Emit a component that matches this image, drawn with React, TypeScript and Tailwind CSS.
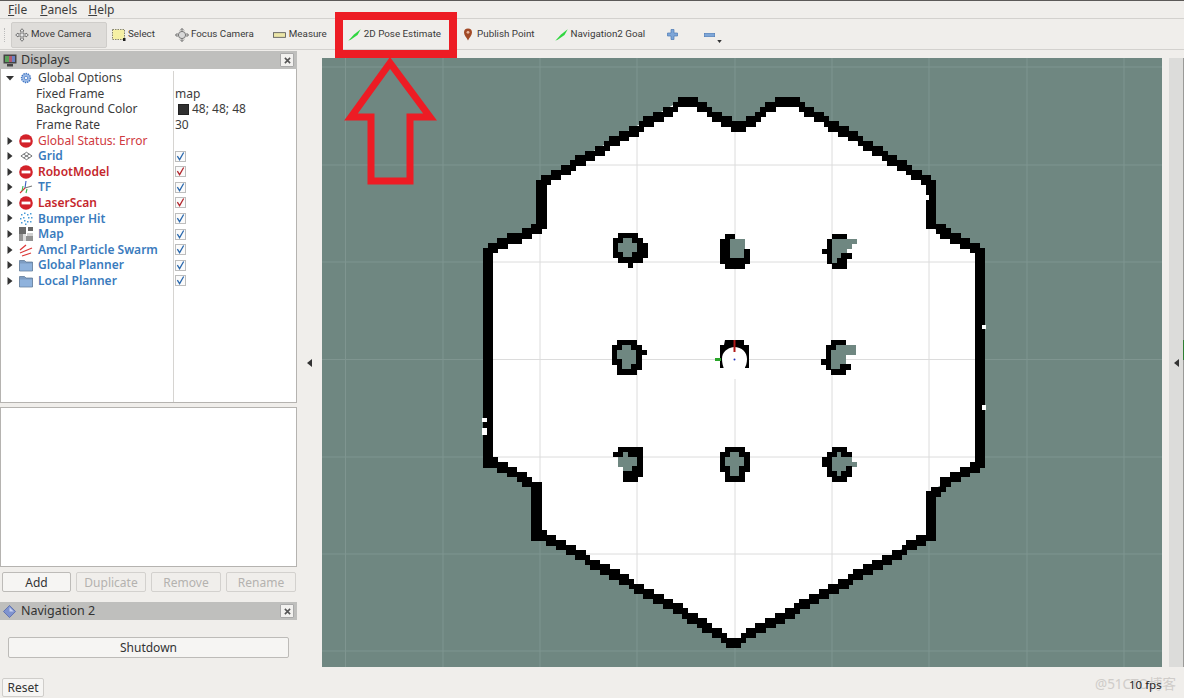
import React from "react";

const CELL = 4.87;
const TEAL = "#6f8781";

const outline: [number, number][] = [
  [680, 101], [690, 101], [735, 128], [780, 101], [790, 101], [929, 184], [929, 226], [980, 252], [980, 463], [929, 492],
  [929, 534], [738, 640], [728, 640], [538, 533], [538, 488], [487, 462], [487, 250], [540, 224], [540, 182],
];

const obstacles: { x: number; y: number; rows: string[] }[] = [
  { x: 613, y: 233, rows: [" ####  ", "##..## ", "#....##", "#....##", "##..###", " ##### ", "   #   "] },
  { x: 720, y: 234, rows: [" ##   ", "##... ", "##... ", "##...#", "##...#", "######", " #### "] },
  { x: 822, y: 234, rows: ["  ###  ", " #.....", " #.... ", "##...  ", " #..## ", " #.## ", "  ###  "] },
  { x: 612, y: 340, rows: [" ####  ", "##..## ", "#....##", "#....# ", "##...# ", " #..## ", " ####  "] },
  { x: 821, y: 340, rows: ["  ###  ", " ##....", " #.....", " #...  ", "##...  ", " #..## ", "  ###  "] },
  { x: 613, y: 447, rows: [" #####", "##.###", " ....#", " ....#", "  ..##", "  ####", "  ### "] },
  { x: 720, y: 447, rows: [" #### ", "##..##", "#....#", "#....#", "##..##", " #..# ", " #### "] },
  { x: 822, y: 447, rows: ["  ### ", " ##.##", "##....", "##.....", " #...#", " ##.##", "  ### "] },
];

function outlineCells() {
  const seen = new Set<string>();
  const ox = 322;
  const oy = 58;
  for (let i = 0; i < outline.length; i++) {
    const [x0, y0] = outline[i];
    const [x1, y1] = outline[(i + 1) % outline.length];
    const steps = Math.ceil(Math.max(Math.abs(x1 - x0), Math.abs(y1 - y0)) / CELL);
    const vertical = x0 === x1;
    for (let s = 0; s <= steps; s++) {
      const cx = Math.round((x0 + ((x1 - x0) * s) / steps - ox) / CELL);
      const cy = Math.round((y0 + ((y1 - y0) * s) / steps - oy) / CELL);
      seen.add(`${cx},${cy}`);
      if (vertical) seen.add(`${cx - 1},${cy}`);
      else seen.add(`${cx},${cy - 1}`);
    }
  }
  return [...seen].map((k) => {
    const [a, b] = k.split(",").map(Number);
    return { x: ox + a * CELL, y: oy + b * CELL };
  });
}

const gridX = [345.5, 443, 540, 637, 735, 832, 929, 1027, 1124];
const gridY = [67, 165, 262, 359.5, 457, 554, 651];

function GridLines({ color }: { color: string }) {
  return (
    <g stroke={color} strokeWidth="1">
      {gridX.map((x) => (
        <line key={x} x1={x} x2={x} y1={58} y2={667} />
      ))}
      {gridY.map((y) => (
        <line key={y} x1={322} x2={1162} y1={y} y2={y} />
      ))}
    </g>
  );
}

function MapView() {
  const points = outline.map((p) => p.join(",")).join(" ");
  return (
    <svg viewBox="322 58 840 609" className="block w-[840px] h-[609px] bg-[#6f8781]">
      <defs>
        <clipPath id="free">
          <polygon points={points} />
        </clipPath>
      </defs>
      <GridLines color="#7f9590" />
      <polygon points={points} fill="#ffffff" />
      <g clipPath="url(#free)">
        <GridLines color="#dcdcdc" />
      </g>
      <g shapeRendering="crispEdges">
        {outlineCells().map((c, i) => (
          <rect key={i} x={c.x} y={c.y} width={CELL + 0.6} height={CELL + 0.6} fill="#000000" />
        ))}
        <rect x="482" y="418" width="5" height="4" fill="#ffffff" />
        <rect x="482" y="428" width="5" height="7" fill="#ffffff" />
        <rect x="924" y="195" width="5" height="5" fill="#ffffff" />
        <rect x="982" y="325" width="4" height="4" fill="#ffffff" />
        <rect x="982" y="405" width="4" height="5" fill="#ffffff" />
        {obstacles.map((o, i) =>
          o.rows.map((row, r) =>
            row.split("").map((ch, c) =>
              ch === " " ? null : (
                <rect
                  key={`${i}-${r}-${c}`}
                  x={o.x + c * CELL}
                  y={o.y + r * CELL}
                  width={CELL + 0.6}
                  height={CELL + 0.6}
                  fill={ch === "#" ? "#000000" : TEAL}
                />
              )
            )
          )
        )}
      </g>
      {/* robot */}
      <path d="M725 340h19v5h5v23h-4v-8h-21v8h-4v-23h4z" fill="#000000" />
      <path d="M722 359c0-7 5-11 12-12 8 0 13 5 13 12 0 4-1 7-3 10l-3 10h-14l-3-10c-1-3-2-6-2-10z" fill="#ffffff" />
      <rect x="733.5" y="340" width="2" height="12" fill="#b01818" />
      <rect x="715" y="358" width="6" height="3" fill="#2aa52a" />
      <circle cx="734.5" cy="359.5" r="1" fill="#2233bb" />
    </svg>
  );
}

function Disabled() {
  return (
    <svg viewBox="0 0 14 14" className="w-[14px] h-[14px]">
      <circle cx="7" cy="7" r="6.8" fill="#d3222a" />
      <rect x="2.6" y="5.6" width="8.8" height="2.8" fill="#ffffff" />
    </svg>
  );
}

function GearIcon() {
  return (
    <svg viewBox="0 0 14 14" className="w-[12px] h-[12px]">
      <circle cx="7" cy="7" r="5.2" fill="#9dbbe6" stroke="#3f74c4" strokeWidth="1.6" strokeDasharray="1.6 1" />
      <circle cx="7" cy="7" r="2" fill="#f4f7fc" stroke="#3f74c4" strokeWidth="0.8" />
    </svg>
  );
}

function GridIcon() {
  return (
    <svg viewBox="0 0 14 10" className="w-[13px] h-[10px]" fill="none" stroke="#55585a" strokeWidth="0.9">
      <path d="M1 5l6-4 6 4-6 4z" />
      <path d="M4 3l6 4M10 3l-6 4" />
    </svg>
  );
}

function TfIcon() {
  return (
    <svg viewBox="0 0 14 14" className="w-[14px] h-[14px]" fill="none" strokeWidth="1.1">
      <path d="M6 8l1-7" stroke="#3a5fc0" />
      <path d="M6 8l7-2" stroke="#777777" />
      <path d="M6 8l-5 5" stroke="#d83030" />
      <path d="M3 11l1-5M8 9l-1 4" stroke="#39b54a" />
    </svg>
  );
}

function BumperIcon() {
  const dots = [[2, 3], [5, 1.5], [8, 3], [11, 2], [1, 7], [4, 6], [9, 6], [12, 6], [2, 11], [5, 9], [8, 10], [11, 10], [6, 12.5]];
  return (
    <svg viewBox="0 0 14 14" className="w-[14px] h-[14px]">
      {dots.map(([x, y], i) => (
        <rect key={i} x={x} y={y} width="1.5" height="1.5" fill="#4a9bd8" />
      ))}
    </svg>
  );
}

function MapIcon() {
  return (
    <svg viewBox="0 0 14 14" className="w-[14px] h-[14px]">
      <rect x="0" y="0" width="7" height="7" fill="#6a6a6a" />
      <rect x="0" y="7" width="4" height="7" fill="#969696" />
      <rect x="4" y="7" width="3" height="7" fill="#dddddd" />
      <rect x="9" y="0" width="5" height="4" fill="#666666" />
      <rect x="8" y="6" width="6" height="3" fill="#d0d0d0" />
      <rect x="7" y="9" width="7" height="5" fill="#929292" />
    </svg>
  );
}

function SwarmIcon() {
  return (
    <svg viewBox="0 0 14 14" className="w-[14px] h-[14px]" fill="none" stroke="#dd3a3a" strokeWidth="1.3">
      <path d="M1 7l6-5M1 10l12-5M3 13l9-3" />
    </svg>
  );
}

function FolderIcon() {
  return (
    <svg viewBox="0 0 14 14" className="w-[14px] h-[14px]">
      <path d="M0.5 2.5h5l1.5 1.5h6.5v9h-13z" fill="#7d9cc2" stroke="#55708f" strokeWidth="0.7" />
      <rect x="1" y="5.5" width="12" height="7" fill="#8fb2dc" />
    </svg>
  );
}

function Arrow({ open }: { open?: boolean }) {
  return open ? (
    <svg viewBox="0 0 8 8" className="w-[8px] h-[8px]">
      <path d="M0 2h8L4 6.5z" fill="#333333" />
    </svg>
  ) : (
    <svg viewBox="0 0 8 8" className="w-[8px] h-[8px]">
      <path d="M1.5 0v8L6.5 4z" fill="#333333" />
    </svg>
  );
}

function Check({ red }: { red?: boolean }) {
  return (
    <div className="w-[11px] h-[11px] bg-[#fbfbfb] border border-[#bdbdbd] flex items-center justify-center">
      <svg viewBox="0 0 10 10" className="w-[9px] h-[9px]" fill="none" stroke={red ? "#b3272d" : "#2a68ad"} strokeWidth="1.4">
        <path d="M1.5 4.5l2.5 4 4.5-8" />
      </svg>
    </div>
  );
}

type RowProps = {
  icon?: React.ReactNode;
  label: string;
  labelClass?: string;
  value?: React.ReactNode;
  open?: boolean;
  child?: boolean;
};

function Row({ icon, label, labelClass, value, open, child }: RowProps) {
  return (
    <div className="flex h-[15.58px] items-center">
      <div className="w-[173px] h-full flex items-center border-r border-[#d6d4d1] shrink-0">
        {child ? (
          <span className="ml-[35px] text-[12px] text-[#3c3c3c] whitespace-nowrap">{label}</span>
        ) : (
          <>
            <span className="ml-[5px] w-[8px] flex">
              <Arrow open={open} />
            </span>
            <span className="ml-[5px] w-[14px] flex items-center justify-center">{icon}</span>
            <span className={`ml-[5px] text-[12px] whitespace-nowrap ${labelClass ?? "text-[#3c3c3c]"}`}>{label}</span>
          </>
        )}
      </div>
      <div className="flex items-center pl-[1px] text-[12px] text-[#3c3c3c] whitespace-nowrap">{value}</div>
    </div>
  );
}

const blue = "font-semibold text-[#3a7bbd]";
const red = "font-semibold text-[#c5262c]";

function CloseBox() {
  return (
    <div className="w-[14px] h-[14px] bg-[#f2f1ef] border border-[#a9a9a9] rounded-[1px] flex items-center justify-center">
      <svg viewBox="0 0 8 8" className="w-[7px] h-[7px]" stroke="#555555" strokeWidth="1.8">
        <path d="M1 1l6 6M7 1l-6 6" />
      </svg>
    </div>
  );
}

function ToolIcon({ kind }: { kind: string }) {
  if (kind === "move")
    return (
      <svg viewBox="0 0 14 14" className="w-[14px] h-[14px]" fill="#e4e4e4" stroke="#6b6b6b" strokeWidth="0.9">
        <path d="M7 .7l2 2.3H8v3h3V5l2.3 2L11 9V8H8v3h1l-2 2.3L5 11h1V8H3v1L.7 7 3 5v1h3V3H5z" />
      </svg>
    );
  if (kind === "select")
    return (
      <svg viewBox="0 0 14 14" className="w-[14px] h-[14px]">
        <rect x="0.5" y="1.5" width="12" height="10" fill="#f5f0a4" stroke="#6a6a5a" strokeWidth="0.8" strokeDasharray="1.5 1" />
        <rect x="11" y="10" width="2.5" height="3" fill="#222222" />
      </svg>
    );
  if (kind === "focus")
    return (
      <svg viewBox="0 0 14 14" className="w-[14px] h-[14px]" fill="none" stroke="#777777" strokeWidth="1">
        <path d="M7 .5v13M.5 7h13" />
        <circle cx="7" cy="7" r="3.6" fill="#d9d9d9" />
        <path d="M5 2.5l2-2 2 2M5 11.5l2 2 2-2M2.5 5l-2 2 2 2M11.5 5l2 2-2 2" />
      </svg>
    );
  if (kind === "measure")
    return (
      <svg viewBox="0 0 14 6" className="w-[13px] h-[6px]">
        <rect x="0.5" y="0.5" width="13" height="5" fill="#ece6a8" stroke="#555555" strokeWidth="0.9" />
      </svg>
    );
  if (kind === "pose")
    return (
      <svg viewBox="0 0 13 12" className="w-[13px] h-[12px]">
        <path d="M0.3 11.7L6 5.5 12.7 .3 9.5 6 3 10.5z" fill="#2fd63f" />
      </svg>
    );
  return (
    <svg viewBox="0 0 10 14" className="w-[10px] h-[13px]">
      <path d="M5 13.5C3.5 10 .7 8 .7 4.8a4.3 4.3 0 018.6 0C9.3 8 6.5 10 5 13.5z" fill="#a24a26" />
      <circle cx="5" cy="4.6" r="1.5" fill="#e9b9a0" />
    </svg>
  );
}

function ToolItem({ kind, label, className }: { kind: string; label: string; className: string }) {
  return (
    <div className={`flex items-center shrink-0 ${className}`}>
      <span className="w-[14px] flex justify-center">
        <ToolIcon kind={kind} />
      </span>
      <span className="ml-[2px] text-[9.8px] font-['Roboto',sans-serif] text-[#3a3a3a] whitespace-nowrap">{label}</span>
    </div>
  );
}

function PanelButton({ label, disabled, className }: { label: string; disabled?: boolean; className: string }) {
  return (
    <div
      className={`h-[20px] pt-[1px] flex items-center justify-center rounded-[2px] border text-[12px] ${className} ${
        disabled ? "border-[#d3d1ce] text-[#b4b2af] bg-[#f0eeeb]" : "border-[#bdbbb8] text-[#333333] bg-[#f6f5f3]"
      }`}
    >
      {label}
    </div>
  );
}

export default function App() {
  return (
    <div className="relative w-[1184px] h-[698px] overflow-hidden bg-[#f0eeeb] flex flex-col font-['Noto_Sans',sans-serif]">
      {/* menu bar */}
      <div className="h-[1px] bg-[#5c5a58]" />
      <div className="h-[17px] flex items-center text-[12px] text-[#3c3c3c]">
        <span className="ml-[8px]">
          <u>F</u>ile
        </span>
        <span className="ml-[13px]">
          <u>P</u>anels
        </span>
        <span className="ml-[11px]">
          <u>H</u>elp
        </span>
      </div>

      {/* toolbar */}
      <div className="h-[32px] pt-[1px] flex items-center border-y border-[#d3d1ce] shrink-0">
        <div className="ml-[4px] w-[3px] h-[14px] border-l border-dotted border-[#bbbbbb]" />
        <div className="ml-[4px] w-[96px] h-[26px] pl-[3px] flex items-center bg-[#dedcd9] border border-[#cfcdca] rounded-[2px]">
          <ToolItem kind="move" label="Move Camera" className="" />
        </div>
        <ToolItem kind="select" label="Select" className="ml-[5px]" />
        <ToolItem kind="focus" label="Focus Camera" className="ml-[20px]" />
        <ToolItem kind="measure" label="Measure" className="ml-[19px]" />
        <ToolItem kind="pose" label="2D Pose Estimate" className="ml-[21px]" />
        <ToolItem kind="publish" label="Publish Point" className="ml-[20px]" />
        <ToolItem kind="pose" label="Navigation2 Goal" className="ml-[20px]" />
        <svg viewBox="0 0 11 11" className="ml-[22px] w-[11px] h-[11px]">
          <path d="M4 .5h3v3.5h3.5v3H7v3.5H4V7H.5V4H4z" fill="#7ea6d8" stroke="#4a78b5" strokeWidth="0.7" />
        </svg>
        <svg viewBox="0 0 11 4" className="ml-[26px] w-[11px] h-[4px]">
          <rect x="0.3" y="0.3" width="10.4" height="3.4" fill="#7ea6d8" stroke="#4a78b5" strokeWidth="0.6" />
        </svg>
        <svg viewBox="0 0 6 4" className="ml-[2px] mt-[14px] w-[5px] h-[3px]">
          <path d="M0 0h6L3 4z" fill="#333333" />
        </svg>
      </div>

      {/* main area */}
      <div className="flex h-[620px] shrink-0">
        <div className="w-[297px] shrink-0 flex flex-col">
          <div className="h-[18px] mt-[1px] bg-[#bfbfbd] flex items-center pl-[3px] pr-[3px]">
            <svg viewBox="0 0 14 13" className="w-[14px] h-[13px]">
              <rect x="0.5" y="0.5" width="13" height="9" fill="#444444" />
              <rect x="2" y="2" width="4" height="6" fill="#5aa05a" />
              <rect x="6" y="2" width="3" height="6" fill="#b05a70" />
              <rect x="9" y="2" width="3" height="6" fill="#6a80c0" />
              <rect x="4" y="10" width="6" height="2.5" fill="#444444" />
            </svg>
            <span className="ml-[4px] text-[12.5px] text-[#333333]">Displays</span>
            <div className="ml-auto">
              <CloseBox />
            </div>
          </div>

          {/* tree */}
          <div className="h-[334px] pt-[1.5px] bg-white border-x border-b border-[#b5b3b0] flex flex-col">
            <Row open icon={<GearIcon />} label="Global Options" />
            <Row child label="Fixed Frame" value="map" />
            <Row
              child
              label="Background Color"
              value={
                <>
                  <span className="ml-[3px] w-[11px] h-[11px] bg-[#303030] border border-[#222222]" />
                  <span className="ml-[3px]">48; 48; 48</span>
                </>
              }
            />
            <Row child label="Frame Rate" value="30" />
            <Row icon={<Disabled />} label="Global Status: Error" labelClass="text-[#cf3a40]" />
            <Row icon={<GridIcon />} label="Grid" labelClass={blue} value={<Check />} />
            <Row icon={<Disabled />} label="RobotModel" labelClass={red} value={<Check red />} />
            <Row icon={<TfIcon />} label="TF" labelClass={blue} value={<Check />} />
            <Row icon={<Disabled />} label="LaserScan" labelClass={red} value={<Check red />} />
            <Row icon={<BumperIcon />} label="Bumper Hit" labelClass={blue} value={<Check />} />
            <Row icon={<MapIcon />} label="Map" labelClass={blue} value={<Check />} />
            <Row icon={<SwarmIcon />} label="Amcl Particle Swarm" labelClass={blue} value={<Check />} />
            <Row icon={<FolderIcon />} label="Global Planner" labelClass={blue} value={<Check />} />
            <Row icon={<FolderIcon />} label="Local Planner" labelClass={blue} value={<Check />} />
            <div className="flex-1 w-[173px] border-r border-[#d6d4d1]" />
          </div>

          <div className="h-[160px] mt-[4px] bg-white border border-[#b5b3b0]" />

          <div className="mt-[5px] flex gap-[5px] pl-[2px]">
            <PanelButton label="Add" className="w-[69px]" />
            <PanelButton label="Duplicate" disabled className="w-[70px]" />
            <PanelButton label="Remove" disabled className="w-[70px]" />
            <PanelButton label="Rename" disabled className="w-[70px]" />
          </div>

          <div className="h-[18px] mt-[10px] bg-[#bfbfbd] flex items-center pl-[3px] pr-[3px]">
            <svg viewBox="0 0 14 14" className="w-[13px] h-[13px]">
              <path d="M7 .5L13.5 7 7 13.5.5 7z" fill="#7f93cf" stroke="#4e62a8" strokeWidth="0.8" />
              <path d="M7 2.5L11.5 7 7 7z" fill="#c8d2ef" />
            </svg>
            <span className="ml-[5px] text-[12.5px] text-[#333333]">Navigation 2</span>
            <div className="ml-auto">
              <CloseBox />
            </div>
          </div>

          <div className="mt-[17px] ml-[8px] w-[281px] h-[21px] flex items-center justify-center rounded-[2px] border border-[#bdbbb8] bg-[#f6f5f3] text-[12px] text-[#333333]">
            Shutdown
          </div>
        </div>

        {/* left splitter */}
        <div className="w-[25px] shrink-0 flex items-center justify-center pt-[6px]">
          <svg viewBox="0 0 5 8" className="w-[5px] h-[8px]">
            <path d="M5 0v8L0 4z" fill="#333333" />
          </svg>
        </div>

        <div className="w-[840px] shrink-0 pt-[8px]">
          <MapView />
        </div>

        {/* right splitter */}
        <div className="w-[7px] shrink-0" />
        <div className="w-[14px] shrink-0 mt-[8px] h-[609px] bg-[#dcdcda] flex items-center justify-center">
          <svg viewBox="0 0 5 8" className="w-[5px] h-[8px]">
            <path d="M5 0v8L0 4z" fill="#333333" />
          </svg>
        </div>
        <div className="w-[1px] shrink-0 mt-[8px] h-[609px] bg-[#9a9a98] pt-[282px]">
          <div className="h-[20px] bg-[#2e7d32]" />
        </div>
      </div>

      {/* status row */}
      <div className="flex-1 flex items-end justify-between pl-[2px] pb-[1px]">
        <div className="w-[42px] h-[19px] flex items-center justify-center rounded-[2px] border border-[#cfcdca] bg-[#f6f5f3] text-[12px] text-[#333333]">
          Reset
        </div>
        <div className="relative w-[90px] h-[24px] mr-[2px]">
          <span className="absolute left-[3px] top-[1px] text-[13.5px] text-[#cfccc9] font-['Noto_Sans','Noto_Sans_CJK_SC',sans-serif] whitespace-nowrap">
            @51CTO博客
          </span>
          <span className="absolute left-[37px] top-[3px] text-[11.5px] text-[#222222] whitespace-nowrap">10 fps</span>
        </div>
      </div>

      {/* red annotation over the toolbar */}
      <div className="absolute left-[335px] top-[12px] w-[122px] h-[46px] border-[8px] border-[#ed1c24]" />
      <svg viewBox="0 0 100 140" className="absolute left-[340px] top-[50px] w-[100px] h-[140px]" fill="none">
        <polygon points="50,13 11,67 31,67 31,131 70,131 70,67 90,67" stroke="#ed1c24" strokeWidth="7" />
      </svg>
    </div>
  );
}
